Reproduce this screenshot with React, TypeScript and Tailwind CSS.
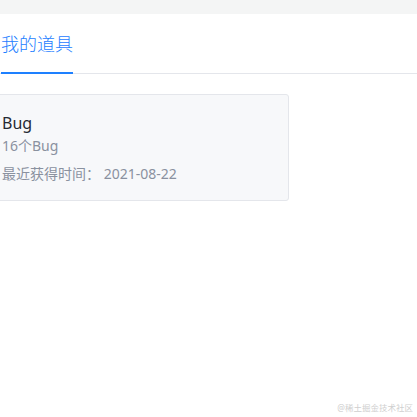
import React from 'react';

const font = { fontFamily: '"Noto Sans", "Noto Sans CJK SC", sans-serif' };

const App: React.FC = () => {
  return (
    <div className="relative h-[417px] w-[417px] overflow-hidden bg-white" style={font}>
      <div className="h-[14px] bg-[#f4f5f5]" />

      <div className="flex h-[60px] border-b border-[#e4e6eb] pl-[1px]">
        <div className="relative flex h-full w-[72px] items-center text-[18px] leading-[24px] font-light text-[#1e80ff]">
          我的道具
          <span className="absolute -bottom-[1px] left-0 h-[2px] w-full bg-[#1e80ff]" />
        </div>
      </div>

      <div className="mt-[20px] -ml-[15px] w-[304px] rounded-[3px] border border-[#e4e6eb] bg-[#f7f8fa] px-[16px] pt-[16px] pb-[15px]">
        <div className="text-[16px] leading-[24px] text-[#252933]">Bug</div>
        <div className="text-[14px] leading-[22px] text-[#8a919f]">16个Bug</div>
        <div className="mt-[6px] text-[14px] leading-[22px] text-[#8a919f]">
          最近获得时间：&nbsp;2021-08-22
        </div>
      </div>

      <div className="absolute bottom-[3px] right-[4px] text-[8.5px] leading-[12px] text-[#cfcfcf]">
        @稀土掘金技术社区
      </div>
    </div>
  );
};

export default App;
